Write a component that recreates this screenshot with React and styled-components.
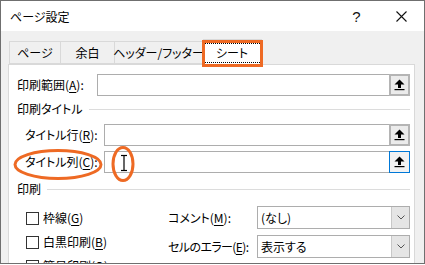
import React from "react";
import styled, { createGlobalStyle } from "styled-components";

const Global = createGlobalStyle`
  html, body { margin: 0; padding: 0; background: #fff; }
  body {
    font-family: "Noto Sans CJK JP", "Noto Sans", sans-serif;
    font-size: 12px;
    color: #000;
    font-feature-settings: "palt";
  }
  * { box-sizing: border-box; }
`;

const Win = styled.div`
  position: relative;
  width: 425px;
  height: 264px;
  border: 1px solid #6f6f6f;
  background: #f0f0f0;
  overflow: hidden;
`;

const TitleBar = styled.div`
  height: 30px;
  background: #fff;
  display: flex;
  align-items: center;
  padding-left: 9px;
  font-size: 12px;
`;

const Title = styled.div`
  flex: 1;
`;

const TitleBtn = styled.div`
  width: 45px;
  height: 30px;
  display: flex;
  align-items: center;
  justify-content: center;
  font-family: "Liberation Sans", sans-serif;
  font-size: 15px;
  color: #111;
`;

const Body = styled.div`
  padding: 10px 9px 0 7px;
`;

const Tabs = styled.div`
  display: flex;
  height: 23px;
  padding-left: 1px;
  align-items: flex-end;
  position: relative;
  z-index: 1;
`;

const Tab = styled.div`
  width: ${(p) => p.$w}px;
  height: ${(p) => (p.$active ? 26 : 23)}px;
  border: 1px solid #d9d9d9;
  border-left: ${(p) => (p.$first ? "1px solid #d9d9d9" : "none")};
  border-bottom: ${(p) => (p.$active ? "none" : "1px solid #d9d9d9")};
  background: ${(p) => (p.$active ? "#fff" : "#f0f0f0")};
  display: flex;
  align-items: center;
  justify-content: center;
  white-space: nowrap;
  font-size: 12px;
  margin-bottom: ${(p) => (p.$active ? -1 : 0)}px;
  position: relative;
`;

const Focus = styled.span`
  border: 1px dotted #000;
  padding: 1px 13px;
  line-height: 16px;
`;

const Highlight = styled.div`
  position: absolute;
  left: -1px;
  top: 0px;
  width: 61px;
  height: 27px;
  border: 3px solid #ee6a24;
`;

const Panel = styled.div`
  background: #fff;
  border: 1px solid #d9d9d9;
  height: 210px;
  padding: 9px 4px 0 8px;
  position: relative;
`;

const Row = styled.div`
  display: flex;
  align-items: center;
  padding-left: ${(p) => p.$indent || 0}px;
  margin-top: ${(p) => p.$mt || 0}px;
`;

const Label = styled.div`
  width: ${(p) => p.$w}px;
  flex: none;
  white-space: nowrap;
  line-height: 16px;
  letter-spacing: ${(p) => (p.$tight ? "-0.6px" : "0")};
`;

const U = styled.span`
  text-decoration: underline;
  text-underline-offset: 2px;
`;

const Field = styled.div`
  flex: 1;
  height: 22px;
  border: 1px solid #adadad;
  display: flex;
  justify-content: flex-end;
`;

const PickBtn = styled.div`
  width: 21px;
  height: 22px;
  margin: -1px -1px -1px 0;
  border: ${(p) => (p.$focus ? "1px solid #0078d7" : "2px solid #b4b4b4")};
  background: ${(p) => (p.$focus ? "#f2f2f2" : "#ebebeb")};
  display: flex;
  align-items: center;
  justify-content: center;
`;

const Group = styled.div`
  display: flex;
  align-items: center;
  gap: 6px;
  margin-top: ${(p) => p.$mt}px;
  line-height: 16px;
  white-space: nowrap;
  &::after {
    content: "";
    flex: 1;
    height: 1px;
    background: #dcdcdc;
  }
`;

const PrintGrid = styled.div`
  display: grid;
  grid-template-columns: 151px 1fr;
  margin-top: 9px;
`;

const Checks = styled.div`
  display: flex;
  flex-direction: column;
  gap: 8px;
  padding-left: 9px;
  padding-top: 4px;
`;

const Check = styled.label`
  display: flex;
  align-items: center;
  gap: 4px;
  line-height: 16px;
  white-space: nowrap;
`;

const Box = styled.span`
  width: 13px;
  height: 13px;
  border: 1px solid #333;
  background: #fff;
  flex: none;
`;

const Selects = styled.div`
  display: flex;
  flex-direction: column;
  gap: 6px;
`;

const SelRow = styled.div`
  display: flex;
  align-items: center;
`;

const Select = styled.div`
  flex: 1;
  height: 23px;
  border: 1px solid #adadad;
  display: flex;
  align-items: center;
  padding-left: 3px;
  line-height: 16px;
`;

const SelText = styled.span`
  flex: 1;
`;

const DropBtn = styled.div`
  width: 18px;
  height: 21px;
  background: #e5e5e5;
  border-left: 1px solid #c8c8c8;
  display: flex;
  align-items: center;
  justify-content: center;
`;

const Overlay = styled.svg`
  position: absolute;
  left: 0;
  top: 0;
  pointer-events: none;
`;

const UpIcon = () => (
  <svg width="11" height="12" viewBox="0 0 11 12">
    <polygon points="5.5,0.5 0.5,5.5 10.5,5.5" fill="#000" />
    <rect x="4" y="5" width="3" height="4" fill="#000" />
    <rect x="0.5" y="10" width="10" height="1.2" fill="#000" />
  </svg>
);

const Chevron = () => (
  <svg width="8" height="5" viewBox="0 0 8 5">
    <polyline points="0.5,0.5 4,4 7.5,0.5" fill="none" stroke="#555" strokeWidth="1" />
  </svg>
);

const CloseIcon = () => (
  <svg width="11" height="11" viewBox="0 0 11 11">
    <path d="M0.5 0.5 L10.5 10.5 M10.5 0.5 L0.5 10.5" stroke="#111" strokeWidth="1.1" fill="none" />
  </svg>
);

export default function App() {
  return (
    <>
      <Global />
      <Win>
        <TitleBar>
          <Title>ページ設定</Title>
          <TitleBtn>?</TitleBtn>
          <TitleBtn>
            <CloseIcon />
          </TitleBtn>
        </TitleBar>
        <Body>
          <Tabs>
            <Tab $w={52} $first>ページ</Tab>
            <Tab $w={54}>余白</Tab>
            <Tab $w={88}>ヘッダー/フッター</Tab>
            <Tab $w={59} $active>
              <Focus>シート</Focus>
              <Highlight />
            </Tab>
          </Tabs>
          <Panel>
            <Row>
              <Label $w={80}>
                印刷範囲(<U>A</U>):
              </Label>
              <Field>
                <PickBtn>
                  <UpIcon />
                </PickBtn>
              </Field>
            </Row>
            <Group $mt={5}>印刷タイトル</Group>
            <Row $indent={8} $mt={7}>
              <Label $w={79}>
                タイトル行(<U>R</U>):
              </Label>
              <Field>
                <PickBtn>
                  <UpIcon />
                </PickBtn>
              </Field>
            </Row>
            <Row $indent={8} $mt={5}>
              <Label $w={79}>
                タイトル列(<U>C</U>):
              </Label>
              <Field>
                <PickBtn $focus>
                  <UpIcon />
                </PickBtn>
              </Field>
            </Row>
            <Group $mt={8}>印刷</Group>
            <PrintGrid>
              <Checks>
                <Check>
                  <Box />
                  <span>
                    枠線(<U>G</U>)
                  </span>
                </Check>
                <Check>
                  <Box />
                  <span>
                    白黒印刷(<U>B</U>)
                  </span>
                </Check>
                <Check>
                  <Box />
                  <span>
                    簡易印刷(<U>Q</U>)
                  </span>
                </Check>
              </Checks>
              <Selects>
                <SelRow>
                  <Label $w={89}>
                    コメント(<U>M</U>):
                  </Label>
                  <Select>
                    <SelText>(なし)</SelText>
                    <DropBtn>
                      <Chevron />
                    </DropBtn>
                  </Select>
                </SelRow>
                <SelRow>
                  <Label $w={89} $tight>
                    セルのエラー(<U>E</U>):
                  </Label>
                  <Select>
                    <SelText>表示する</SelText>
                    <DropBtn>
                      <Chevron />
                    </DropBtn>
                  </Select>
                </SelRow>
              </Selects>
            </PrintGrid>
          </Panel>
        </Body>
        <Overlay width="425" height="265" viewBox="0 0 425 265">
          <ellipse cx="57" cy="163.5" rx="43" ry="14" fill="none" stroke="#ee6a24" strokeWidth="3" />
          <ellipse cx="122" cy="163" rx="10" ry="16.5" fill="none" stroke="#ee6a24" strokeWidth="3" />
          <g stroke="#000" strokeWidth="1.2">
            <line x1="123" y1="155" x2="123" y2="169" />
            <line x1="120" y1="154.5" x2="126" y2="154.5" />
            <line x1="120" y1="169.5" x2="126" y2="169.5" />
          </g>
        </Overlay>
      </Win>
    </>
  );
}
